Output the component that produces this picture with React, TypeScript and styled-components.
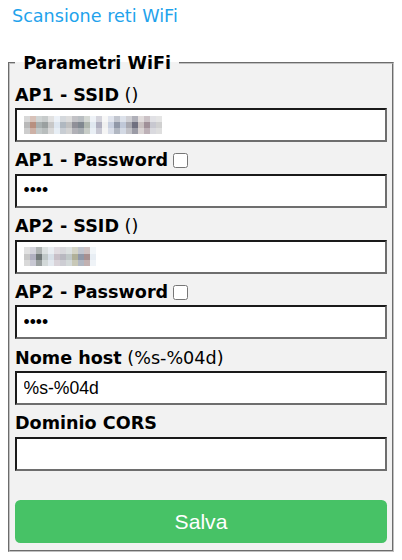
import React from 'react';
import styled, {createGlobalStyle} from 'styled-components';

const GlobalStyle = createGlobalStyle`
    body {
        margin: 0;
        background: #ffffff;
        color: #000000;
        font-family: "DejaVu Sans", Verdana, sans-serif;
        font-size: 17.6px;
    }
`;

const Page = styled.div`
    padding: 0 8px;
`;

const ScanRow = styled.div`
    padding: 6px 0 0 4px;
`;

const ScanLink = styled.a`
    color: #1fa3ec;
    text-decoration: none;
`;

const Box = styled.fieldset`
    margin: 27px 0 0;
    padding: 11.5px 5px 6.5px;
    background: #f2f2f2;
    border: 2px groove #c0c0c0;
    min-width: 0;
`;

const Legend = styled.legend`
    padding: 0 2px;
    font-weight: bold;
`;

const Group = styled.div`
    display: flex;
    flex-direction: column;
    gap: 3px;
    margin-bottom: 8.3px;
`;

const Label = styled.div`
    display: flex;
    align-items: center;
    line-height: 20.5px;
    white-space: pre;
`;

const Hint = styled.span`
    font-weight: normal;
`;

const Check = styled.input`
    width: 15px;
    height: 15px;
    margin: 0 0 0 5px;
`;

const Frame = styled.div`
    box-sizing: border-box;
    height: 34px;
    display: flex;
    align-items: center;
    padding: 0 6.5px;
    background: #ffffff;
    border: 2px solid;
    border-color: #1a1a1a #6e6e6e #6e6e6e #1a1a1a;
`;

const Input = styled.input`
    width: 100%;
    border: 0;
    padding: 0;
    background: transparent;
    outline: none;
    color: #000000;
    font-family: "Liberation Sans", Arial, sans-serif;
    font-size: 17.6px;
`;

const Mosaic = styled.div<{$cols: number}>`
    display: grid;
    grid-template-columns: repeat(${({$cols}) => $cols}, 6px);
    grid-auto-rows: 6.2px;
`;

const Tile = styled.span<{$c: string}>`
    background: ${({$c}) => $c};
`;

const SaveButton = styled.button`
    display: block;
    width: 100%;
    height: 43px;
    margin-top: 29.5px;
    border: 0;
    border-radius: 5.3px;
    background: #47c266;
    color: #ffffff;
    font-family: "Liberation Sans", Arial, sans-serif;
    font-size: 21.1px;
    padding: 0;
`;

const mix = (hex: string, t: number) => {
    const n = parseInt(hex.slice(1), 16);
    const ch = [(n >> 16) & 255, (n >> 8) & 255, n & 255].map(v => Math.round(v + (255 - v) * t));
    return `rgb(${ch.join(',')})`;
};

const SSID1 = ['#b8b8b8', '#b89080', '#a8b0b0', '#9aa0a0', '#c8c8c8', '#dde6f0', '#b0b8c0', '#c0c0c0',
    '#909098', '#808890', '#b0b8b0', '#e0e8f0', '#b0b0c0', '#f0f0f0', '#c8d0e0', '#9098a8', '#c0c8d8',
    '#a8a8b0', '#707080', '#c8c0c0', '#a09098', '#c8c8d0', '#d0d0d0'];

const SSID2 = ['#c8c8c8', '#b0b0c0', '#707878', '#c0c8c8', '#d8e0e8', '#c8c0c8', '#b8b8c0', '#c0c8c8',
    '#b0b098', '#9098a8', '#a89090', '#e8eef4'];

const Blurred = ({colors}: {colors: string[]}) => (
    <Mosaic $cols={colors.length}>
        {colors.map((c, i) => <Tile key={`t${i}`} $c={mix(c, 0.45)} />)}
        {colors.map((c, i) => <Tile key={`m${i}`} $c={c} />)}
        {colors.map((c, i) => <Tile key={`b${i}`} $c={mix(c, 0.3)} />)}
    </Mosaic>
);

interface Field {
    label: string;
    hint?: string;
    check?: boolean;
    kind: 'mosaic' | 'password' | 'text';
    tiles?: string[];
    value?: string;
}

const fields: Field[] = [
    {label: 'AP1 - SSID', hint: ' ()', kind: 'mosaic', tiles: SSID1},
    {label: 'AP1 - Password', check: true, kind: 'password'},
    {label: 'AP2 - SSID', hint: ' ()', kind: 'mosaic', tiles: SSID2},
    {label: 'AP2 - Password', check: true, kind: 'password'},
    {label: 'Nome host', hint: ' (%s-%04d)', kind: 'text', value: '%s-%04d'},
    {label: 'Dominio CORS', kind: 'text', value: ''},
];

const App = () => (
    <>
        <GlobalStyle />
        <Page>
            <ScanRow>
                <ScanLink href='#'>Scansione reti WiFi</ScanLink>
            </ScanRow>
            <Box>
                <Legend>{'\u00a0Parametri WiFi\u00a0'}</Legend>
                {fields.map(field => (
                    <Group key={field.label}>
                        <Label>
                            <b>{field.label}</b>
                            {field.hint && <Hint>{field.hint}</Hint>}
                            {field.check && <Check type='checkbox' />}
                        </Label>
                        <Frame>
                            {'mosaic' === field.kind && <Blurred colors={field.tiles ?? []} />}
                            {'password' === field.kind && <Input type='password' defaultValue='****' />}
                            {'text' === field.kind && <Input type='text' defaultValue={field.value} />}
                        </Frame>
                    </Group>
                ))}
                <SaveButton type='button'>Salva</SaveButton>
            </Box>
        </Page>
    </>
);

export default App;
